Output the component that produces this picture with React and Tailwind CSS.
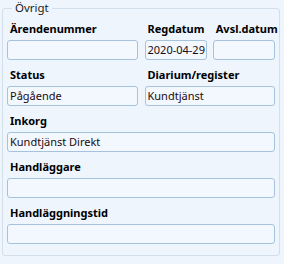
import React from 'react'

const FONT = { fontFamily: '"Noto Sans", "Open Sans", sans-serif' }

function Field({ label, value, className = '' }) {
  return (
    <div className={`flex flex-col ${className}`}>
      <span className="h-[16px] pl-[3px] text-[11px] leading-[16px] font-bold text-black whitespace-nowrap">{label}</span>
      <div className="mt-[3px] h-[20px] rounded-[3px] border border-[#a6c2dd] bg-[#f3f8fe] px-[2px] text-[11px] leading-[18px] text-[#1a0a10] whitespace-nowrap overflow-hidden">
        {value}
      </div>
    </div>
  )
}

export default function App() {
  return (
    <div className="w-[284px] h-[264px] bg-[#eef5fd] pl-[2px] pr-[4px]" style={FONT}>
      <fieldset className="h-[256px] rounded-[3px] border border-[#d3dfea] px-[4px] pb-[11px]">
        <legend className="ml-[5px] px-[3px] text-[11.5px] leading-[16px] text-[#1b1b1b]">Övrigt</legend>
        <div className="pt-[5px] grid grid-cols-2 gap-x-[7px] gap-y-[7px]">
          <Field label="Ärendenummer" value="" />
          <div className="grid grid-cols-2 gap-x-[6px]">
            <Field label="Regdatum" value="2020-04-29" />
            <Field label="Avsl.datum" value="" />
          </div>
          <Field label="Status" value="Pågående" />
          <Field label="Diarium/register" value="Kundtjänst" />
          <Field label="Inkorg" value="Kundtjänst Direkt" className="col-span-2" />
          <Field label="Handläggare" value="" className="col-span-2" />
          <Field label="Handläggningstid" value="" className="col-span-2" />
        </div>
      </fieldset>
    </div>
  )
}
